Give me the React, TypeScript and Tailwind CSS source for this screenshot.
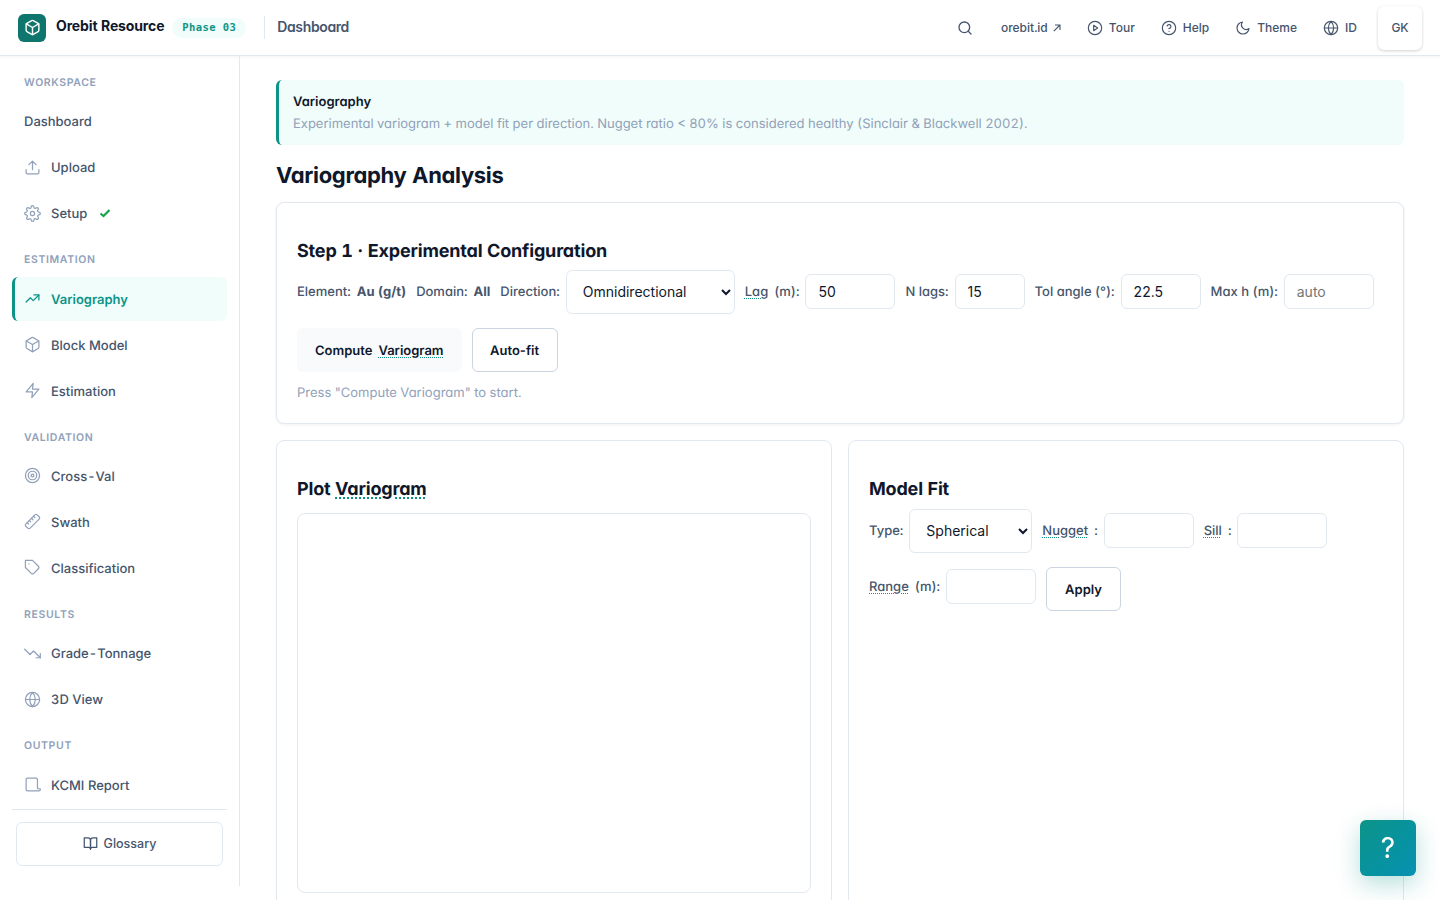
import type { ReactNode } from "react"
import {
  FiBookOpen,
  FiBox,
  FiGlobe,
  FiHelpCircle,
  FiMoon,
  FiPlayCircle,
  FiSearch,
  FiSettings,
  FiTag,
  FiZap,
} from "react-icons/fi"

// Base wrapper for the outline icons that are specific to this sidebar
function Icon({ children }: { children: ReactNode }) {
  return (
    <svg
      width="17"
      height="17"
      viewBox="0 0 24 24"
      fill="none"
      stroke="currentColor"
      strokeWidth="1.75"
      strokeLinecap="round"
      strokeLinejoin="round"
    >
      {children}
    </svg>
  )
}

type NavItem = {
  label: string
  icon?: ReactNode
  active?: boolean
  done?: boolean
}

type NavSection = {
  title: string
  items: NavItem[]
}

const sections: NavSection[] = [
  {
    title: "Workspace",
    items: [
      { label: "Dashboard" },
      {
        label: "Upload",
        icon: (
          <Icon>
            <path d="M21 15v4a2 2 0 0 1-2 2H5a2 2 0 0 1-2-2v-4" />
            <path d="M17 8l-5-5-5 5M12 3v12" />
          </Icon>
        ),
      },
      { label: "Setup", icon: <FiSettings size={17} strokeWidth={1.75} />, done: true },
    ],
  },
  {
    title: "Estimation",
    items: [
      {
        label: "Variography",
        active: true,
        icon: (
          <Icon>
            <path d="M3 17l6-6 4 4 8-8" />
            <path d="M14 7h7v7" />
          </Icon>
        ),
      },
      { label: "Block Model", icon: <FiBox size={17} strokeWidth={1.75} /> },
      { label: "Estimation", icon: <FiZap size={17} strokeWidth={1.75} /> },
    ],
  },
  {
    title: "Validation",
    items: [
      {
        label: "Cross-Val",
        icon: (
          <Icon>
            <circle cx="12" cy="12" r="10" />
            <circle cx="12" cy="12" r="6" />
            <circle cx="12" cy="12" r="2" />
          </Icon>
        ),
      },
      {
        label: "Swath",
        icon: (
          <Icon>
            <path d="M21.3 8.7 8.7 21.3c-1 1-2.5 1-3.4 0l-2.6-2.6c-1-1-1-2.5 0-3.4L15.3 2.7c1-1 2.5-1 3.4 0l2.6 2.6c1 1 1 2.5 0 3.4Z" />
            <path d="m7.5 10.5 2 2M10.5 7.5l2 2M13.5 4.5l2 2M4.5 13.5l2 2" />
          </Icon>
        ),
      },
      { label: "Classification", icon: <FiTag size={17} strokeWidth={1.75} /> },
    ],
  },
  {
    title: "Results",
    items: [
      {
        label: "Grade-Tonnage",
        icon: (
          <Icon>
            <path d="M23 18l-9.5-9.5-5 5L1 6" />
            <path d="M17 18h6v-6" />
          </Icon>
        ),
      },
      { label: "3D View", icon: <FiGlobe size={17} strokeWidth={1.75} /> },
    ],
  },
  {
    title: "Output",
    items: [
      {
        label: "KCMI Report",
        icon: (
          <Icon>
            <path d="M19 17V5a2 2 0 0 0-2-2H5a2 2 0 0 0-2 2v14a2 2 0 0 0 2 2h16a2 2 0 0 0 2-2v-1h-4" />
          </Icon>
        ),
      },
    ],
  },
]

function Header() {
  return (
    <header className="flex h-14 shrink-0 items-center border-b border-slate-200 bg-white px-[18px] shadow-[0_1px_3px_rgba(15,23,42,0.05)] [text-rendering:auto]">
      <div className="flex size-7 items-center justify-center rounded-md bg-[#0f766e] text-white">
        <FiBox size={17} strokeWidth={2} />
      </div>
      <span className="-mt-1 ml-2.5 text-sm font-bold tracking-[-0.01em] text-slate-900">Orebit Resource</span>
      <span className="ml-2 flex h-5 items-center rounded-full bg-[#f0fdfa] px-2.5 font-['DejaVu_Sans_Mono',monospace] text-[10.5px] font-bold tracking-[0.04em] text-[#0d9488]">
        Phase 03
      </span>
      <span className="ml-[18px] h-[23px] w-px bg-slate-200" />
      <span className="-mt-px ml-3 text-sm font-semibold tracking-[-0.027em] text-slate-600">Dashboard</span>

      <nav className="ml-auto flex items-center text-xs font-medium text-slate-600">
        <FiSearch size={16} strokeWidth={2} />
        <a className="ml-7 flex items-center gap-[5px]">
          orebit.id
          <svg width="8" height="8" viewBox="0 0 8 8" fill="none" stroke="currentColor" strokeWidth="1.1">
            <path d="M0.8 7.2L7 1M2 1h5v5" />
          </svg>
        </a>
        <a className="ml-[26px] flex items-center gap-1.5">
          <FiPlayCircle size={16} strokeWidth={1.75} />
          Tour
        </a>
        <a className="ml-[26px] flex items-center gap-1.5">
          <FiHelpCircle size={16} strokeWidth={1.75} />
          Help
        </a>
        <a className="ml-[26px] flex items-center gap-1.5">
          <FiMoon size={16} strokeWidth={1.75} />
          Theme
        </a>
        <a className="ml-[26px] flex items-center gap-1.5">
          <FiGlobe size={16} strokeWidth={1.75} />
          ID
        </a>
        <button className="ml-[21px] size-11 rounded-md bg-white text-xs font-medium shadow-[0_1px_3px_rgba(15,23,42,0.2)]">
          GK
        </button>
      </nav>
    </header>
  )
}

function Sidebar() {
  return (
    <aside className="flex h-[830px] w-60 shrink-0 flex-col border-r border-slate-200 px-3 [font-feature-settings:'tnum']">
      <div className="pt-[1.6px]">
        {sections.map((section) => (
          <div key={section.title}>
            <div className="flex h-[41.46px] items-end px-3 pb-[8.4px] text-[10.5px] leading-4 font-semibold tracking-[0.06em] text-slate-400 uppercase">
              {section.title}
            </div>
            <div className="flex flex-col gap-0.5">
              {section.items.map((item) => (
                <a
                  key={item.label}
                  className={`flex h-11 items-center gap-2.5 rounded-md border-l-3 pr-3 pl-[9px] text-[13px] ${
                    item.active
                      ? "border-[#0d9488] bg-[#f0fdfa] font-semibold text-[#0d9488]"
                      : "border-transparent font-medium text-slate-600"
                  }`}
                >
                  {item.icon && (
                    <span className={item.active ? "text-[#0d9488]" : "text-slate-400"}>{item.icon}</span>
                  )}
                  <span className="pt-[3.54px]">{item.label}</span>
                  {item.done && (
                    <svg
                      className="ml-0.5"
                      width="12"
                      height="10"
                      viewBox="0 0 12 10"
                      fill="none"
                      stroke="#16a34a"
                      strokeWidth="2.2"
                    >
                      <path d="M1.5 5.5L4.5 8L10.5 2" />
                    </svg>
                  )}
                </a>
              ))}
            </div>
          </div>
        ))}
      </div>
      <div className="mt-[2px] border-t border-slate-200 px-1 pt-3">
        <button className="flex h-11 w-full items-center justify-center gap-1.5 rounded-md border border-slate-200 text-[12.5px] font-medium text-slate-600 [font-feature-settings:normal]">
          <FiBookOpen size={15} strokeWidth={2} />
          <span className="pt-0.5">Glossary</span>
        </button>
      </div>
    </aside>
  )
}

function Term({ children }: { children: ReactNode }) {
  return (
    <span className="underline decoration-[#0d9488] decoration-dotted decoration-1 underline-offset-2">{children}</span>
  )
}

type FieldProps = {
  label: ReactNode
  width: string
  value?: string
  placeholder?: string
}

function Field({ label, width, value, placeholder }: FieldProps) {
  return (
    <label className="mb-px flex items-center gap-1.5">
      <span className="flex gap-1.5 pt-0.5">{label}</span>
      <input
        className={`h-[35px] rounded-md border border-slate-200 bg-white px-3 text-sm font-normal text-slate-900 [font-feature-settings:normal] placeholder:text-[#757575] ${width}`}
        defaultValue={value}
        placeholder={placeholder}
      />
    </label>
  )
}

function SelectField({ label, width, value }: FieldProps) {
  return (
    <label className="flex items-center gap-1.5">
      <span className="pt-0.5">{label}</span>
      <select
        className={`h-11 rounded-md border border-slate-200 bg-white px-3 pb-px text-sm font-normal text-slate-900 [font-feature-settings:normal] ${width}`}
      >
        <option>{value}</option>
      </select>
    </label>
  )
}

export default function App() {
  return (
    <div className="flex h-[900px] w-[1440px] flex-col overflow-hidden bg-white font-[Inter,sans-serif] [font-feature-settings:'cv11','tnum'] [text-rendering:geometricPrecision]">
      <Header />
      <div className="flex min-h-0 flex-1">
        <Sidebar />
        <main className="flex-1 px-9 pt-6">
          <div className="h-[65px] rounded-md border-l-3 border-[#0d9488] bg-[#f0fdfa] px-3.5 pt-3 text-[13px]">
            <div className="leading-[21px] font-semibold text-slate-900">Variography</div>
            <div className="mt-px leading-[21px] text-slate-400">
              Experimental variogram + model fit per direction. Nugget ratio &lt; 80% is considered healthy (Sinclair &amp;
              Blackwell 2002).
            </div>
          </div>

          <h2 className="mt-[17px] text-[22px] leading-7 font-bold tracking-[-0.015em] text-slate-900">
            Variography Analysis
          </h2>

          {/* Step 1 */}
          <section className="mt-3 h-[222px] rounded-lg border border-slate-200 bg-white px-5 pt-[35px] shadow-[0_1px_3px_rgba(15,23,42,0.06)]">
            <h3 className="text-[18px] leading-7 font-bold tracking-[-0.01em] text-slate-900">
              Step 1 · Experimental Configuration
            </h3>
            <div className="mt-1 flex items-center gap-2.5 text-[13px] font-medium whitespace-nowrap text-slate-600">
              <span className="flex gap-1.5 pt-0.5">
                Element: <b className="font-bold">Au (g/t)</b>
              </span>
              <span className="flex gap-1.5 pt-0.5">
                Domain: <b className="font-bold">All</b>
              </span>
              <SelectField label="Direction:" width="w-[169px]" value="Omnidirectional" />
              <Field
                label={
                  <>
                    <Term>Lag</Term> (m):
                  </>
                }
                width="w-[90px]"
                value="50"
              />
              <Field label="N lags:" width="w-[70px]" value="15" />
              <Field label="Tol angle (°):" width="w-20" value="22.5" />
              <Field label="Max h (m):" width="w-[90px]" placeholder="auto" />
            </div>
            <div className="mt-3.5 flex gap-2.5 text-[13px] font-semibold text-slate-900 [font-feature-settings:normal]">
              <button className="flex h-11 items-center gap-1.5 rounded-md bg-slate-50 px-[18px] pt-[3px] [text-rendering:inherit]">
                Compute <Term>Variogram</Term>
              </button>
              <button className="h-11 w-[86px] rounded-md border border-slate-300 bg-white pt-[3px] [text-rendering:inherit]">
                Auto-fit
              </button>
            </div>
            <p className="mt-[11px] text-[13px] leading-[21px] text-slate-400">Press "Compute Variogram" to start.</p>
          </section>

          <div className="mt-4 grid grid-cols-2 gap-4">
            <section className="h-[480px] rounded-lg border border-slate-200 bg-white px-5 pt-[35px]">
              <h3 className="text-[18px] leading-7 font-bold tracking-[-0.01em] text-slate-900">
                Plot{" "}
                <span className="underline decoration-[#0d9488] decoration-dotted decoration-2 underline-offset-2">
                  Variogram
                </span>
              </h3>
              <div className="mt-[9px] h-[380px] rounded-lg border border-slate-200" />
            </section>

            <section className="h-[480px] rounded-lg border border-slate-200 bg-white px-5 pt-[35px]">
              <h3 className="text-[18px] leading-7 font-bold tracking-[-0.01em] text-slate-900">Model Fit</h3>
              <div className="mt-[5px] flex items-center gap-2.5 text-[13px] font-medium text-slate-600">
                <SelectField label="Type:" width="w-[123px]" value="Spherical" />
                <Field
                  label={
                    <>
                      <Term>Nugget</Term> :
                    </>
                  }
                  width="w-[90px]"
                />
                <Field
                  label={
                    <>
                      <Term>Sill</Term> :
                    </>
                  }
                  width="w-[90px]"
                />
              </div>
              <div className="mt-3.5 flex gap-2.5 text-[13px] font-medium text-slate-600">
                <div className="pt-0.5">
                  <Field
                    label={
                      <>
                        <Term>Range</Term> (m):
                      </>
                    }
                    width="w-[90px]"
                  />
                </div>
                <button className="h-11 w-[75px] rounded-md border border-slate-300 bg-white pt-[3px] font-semibold text-slate-900 [font-feature-settings:normal] [text-rendering:inherit]">
                  Apply
                </button>
              </div>
            </section>
          </div>
        </main>
      </div>

      {/* Floating help */}
      <button className="fixed top-[820px] left-[1360px] size-14 rounded-md bg-linear-135 from-[#0d9488] to-[#0891b2] text-[28px] text-white shadow-[0_8px_24px_rgba(13,148,136,0.3)]">
        ?
      </button>
    </div>
  )
}
